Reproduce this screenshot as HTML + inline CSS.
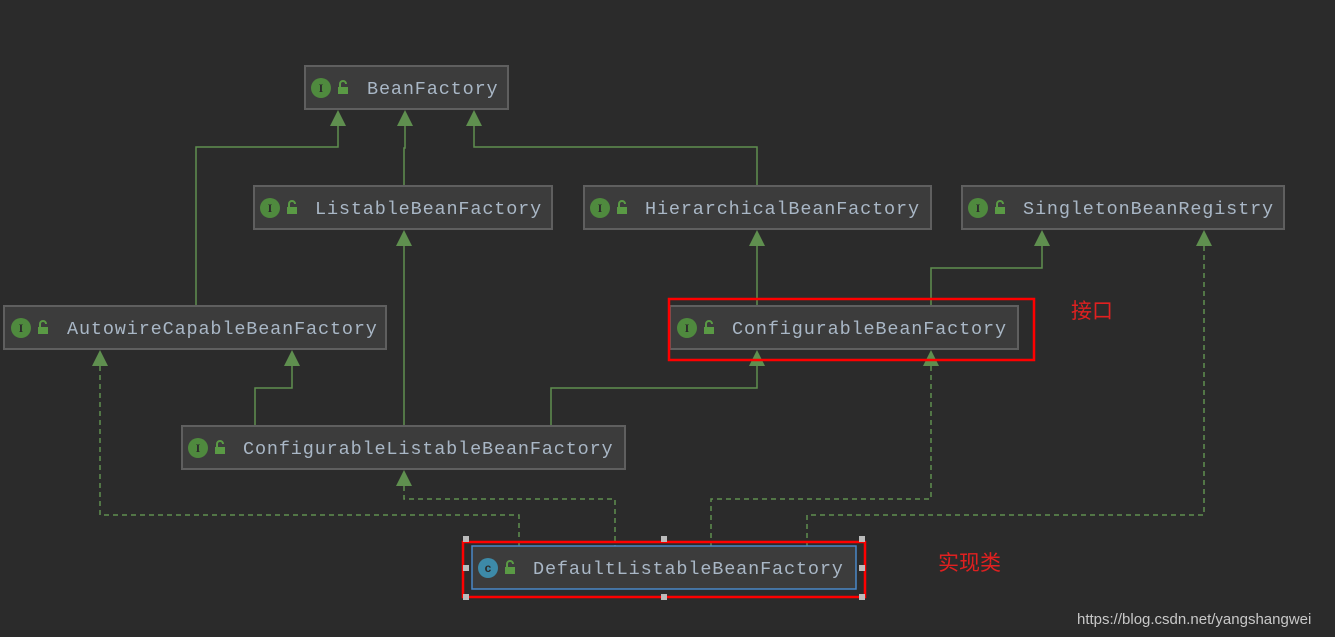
<!DOCTYPE html><html><head><meta charset="utf-8"><style>
body{margin:0;background:#2b2b2b;width:1335px;height:637px;overflow:hidden}
svg{display:block}
.b{fill:#3c3c3c;stroke:#5f5f5f;stroke-width:2}
.t{font-family:"Liberation Mono",monospace;font-size:18.5px;fill:#a9b7c6;letter-spacing:0.85px}
.l{stroke:#5f8f4f;stroke-width:1.5;fill:none}
.d{stroke:#5f8f4f;stroke-width:1.5;fill:none;stroke-dasharray:5,4}
.a{fill:#5f8f4f}
.ic{fill:#4f8a3e}
.it{font-family:"Liberation Serif",serif;font-weight:bold;font-size:12px;fill:#2b2b2b;text-anchor:middle}
</style></head><body>
<svg width="1335" height="637" xmlns="http://www.w3.org/2000/svg">
<defs>
<g id="lk"><rect x="0" y="5" width="10" height="7" fill="#5a9a45"/><path d="M2 5 V2 A3 3 0 0 1 8 2" stroke="#5a9a45" stroke-width="2" fill="none"/></g>
</defs>
<path class="l" d="M338 126V147H196V306"/>
<path class="l" d="M405 126V148H404V186"/>
<path class="l" d="M474 126V147H757V186"/>
<path class="l" d="M404 246V426"/>
<path class="l" d="M757 246V306"/>
<path class="l" d="M1042 246V268H931V306"/>
<path class="d" d="M1204 246V515H807V546"/>
<path class="d" d="M100 366V515H519V546"/>
<path class="l" d="M292 366V388H255V426"/>
<path class="l" d="M757 366V388H551V426"/>
<path class="d" d="M931 366V499H711V546"/>
<path class="d" d="M404 486V499H615V546"/>
<g class="a">
<path d="M338 110l8 16h-16z"/><path d="M405 110l8 16h-16z"/><path d="M474 110l8 16h-16z"/>
<path d="M404 230l8 16h-16z"/><path d="M757 230l8 16h-16z"/><path d="M1042 230l8 16h-16z"/><path d="M1204 230l8 16h-16z"/>
<path d="M100 350l8 16h-16z"/><path d="M292 350l8 16h-16z"/><path d="M757 350l8 16h-16z"/><path d="M931 350l8 16h-16z"/>
<path d="M404 470l8 16h-16z"/>
</g>
<g>
<rect class="b" x="305" y="66" width="203" height="43"/><circle class="ic" cx="321" cy="88" r="10"/><text class="it" x="321" y="92">I</text><use href="#lk" x="338" y="82"/><text class="t" x="367" y="94">BeanFactory</text>
<rect class="b" x="254" y="186" width="298" height="43"/><circle class="ic" cx="270" cy="208" r="10"/><text class="it" x="270" y="212">I</text><use href="#lk" x="287" y="202"/><text class="t" x="315" y="214">ListableBeanFactory</text>
<rect class="b" x="584" y="186" width="347" height="43"/><circle class="ic" cx="600" cy="208" r="10"/><text class="it" x="600" y="212">I</text><use href="#lk" x="617" y="202"/><text class="t" x="645" y="214">HierarchicalBeanFactory</text>
<rect class="b" x="962" y="186" width="322" height="43"/><circle class="ic" cx="978" cy="208" r="10"/><text class="it" x="978" y="212">I</text><use href="#lk" x="995" y="202"/><text class="t" x="1023" y="214">SingletonBeanRegistry</text>
<rect class="b" x="4" y="306" width="382" height="43"/><circle class="ic" cx="21" cy="328" r="10"/><text class="it" x="21" y="332">I</text><use href="#lk" x="38" y="322"/><text class="t" x="67" y="334">AutowireCapableBeanFactory</text>
<rect class="b" x="670" y="306" width="348" height="43"/><circle class="ic" cx="687" cy="328" r="10"/><text class="it" x="687" y="332">I</text><use href="#lk" x="704" y="322"/><text class="t" x="732" y="334">ConfigurableBeanFactory</text>
<rect class="b" x="182" y="426" width="443" height="43"/><circle class="ic" cx="198" cy="448" r="10"/><text class="it" x="198" y="452">I</text><use href="#lk" x="215" y="442"/><text class="t" x="243" y="454">ConfigurableListableBeanFactory</text>
<rect x="472" y="546" width="384" height="43" fill="#3c3c3c" stroke="#4a88c7" stroke-width="1.5"/><circle cx="488" cy="568" r="10" fill="#3d8aa8"/><text x="488" y="572" text-anchor="middle" font-family="Liberation Sans,sans-serif" font-size="12" font-weight="bold" fill="#2b2b2b">c</text><use href="#lk" x="505" y="562"/><text class="t" x="533" y="574">DefaultListableBeanFactory</text>
</g>
<rect x="669" y="299" width="365" height="61" fill="none" stroke="#f00" stroke-width="2.5"/>
<rect x="463" y="542" width="402" height="55" fill="none" stroke="#f00" stroke-width="2.5"/>
<g fill="#bbb">
<rect x="463" y="536" width="6" height="6"/><rect x="661" y="536" width="6" height="6"/><rect x="859" y="536" width="6" height="6"/>
<rect x="463" y="565" width="6" height="6"/><rect x="859" y="565" width="6" height="6"/>
<rect x="463" y="594" width="6" height="6"/><rect x="661" y="594" width="6" height="6"/><rect x="859" y="594" width="6" height="6"/>
</g>
<text x="1071" y="318" font-family="Liberation Sans,'Noto Sans CJK SC',sans-serif" font-size="21" fill="#e02020">接口</text>
<text x="938" y="570" font-family="Liberation Sans,'Noto Sans CJK SC',sans-serif" font-size="21" fill="#e02020">实现类</text>
<text x="1077" y="624" font-family="Liberation Sans,sans-serif" font-size="15" fill="#c8c8c8">https://blog.csdn.net/yangshangwei</text>
</svg>
</body></html>
